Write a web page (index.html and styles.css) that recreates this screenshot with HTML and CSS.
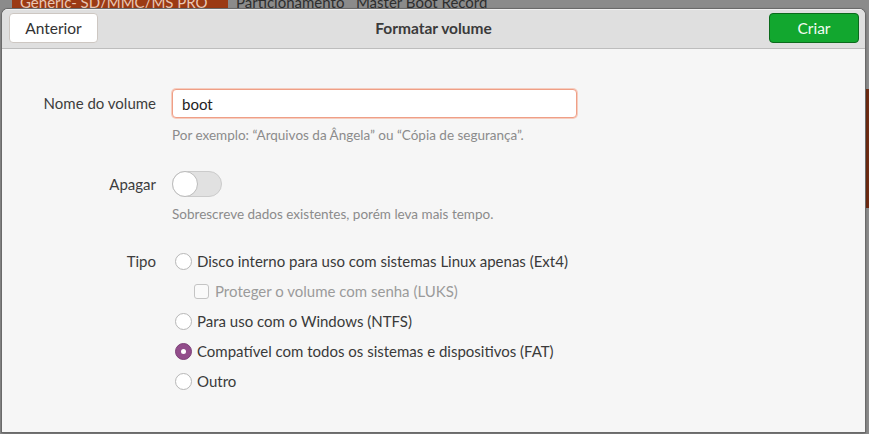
FILE: index.html
```html
<!DOCTYPE html>
<html lang="pt">
<head>
<meta charset="utf-8">
<title>Formatar volume</title>
<link rel="stylesheet" href="styles.css">
</head>
<body>
<div class="backdrop">
  <div class="behind-strip">
    <div class="behind-tab">Generic- SD/MMC/MS PRO</div>
    <div class="behind-text">Particionamento&nbsp;&nbsp; Master Boot Record</div>
  </div>
  <div class="behind-side"></div>
  <div class="dialog">
    <div class="headerbar">
      <button class="btn btn-prev">Anterior</button>
      <div class="title">Formatar volume</div>
      <button class="btn btn-create">Criar</button>
    </div>
    <div class="content">
      <div class="row row-name">
        <div class="label">Nome do volume</div>
        <div class="control">
          <div class="entry">boot</div>
          <div class="hint">Por exemplo: “Arquivos da Ângela” ou “Cópia de segurança”.</div>
        </div>
      </div>
      <div class="row row-erase">
        <div class="label">Apagar</div>
        <div class="control">
          <div class="switch"><span class="knob"></span></div>
          <div class="hint">Sobrescreve dados existentes, porém leva mais tempo.</div>
        </div>
      </div>
      <div class="row row-type">
        <div class="label">Tipo</div>
        <div class="control options">
          <div class="opt"><span class="radio"></span><span>Disco interno para uso com sistemas Linux apenas (Ext4)</span></div>
          <div class="opt sub disabled"><span class="check"></span><span>Proteger o volume com senha (LUKS)</span></div>
          <div class="opt"><span class="radio"></span><span>Para uso com o Windows (NTFS)</span></div>
          <div class="opt"><span class="radio on"></span><span>Compatível com todos os sistemas e dispositivos (FAT)</span></div>
          <div class="opt"><span class="radio"></span><span>Outro</span></div>
        </div>
      </div>
    </div>
  </div>
</div>
</body>
</html>
```

FILE: styles.css
```css
* { box-sizing: border-box; }
html, body { margin: 0; padding: 0; }
body {
  width: 869px;
  height: 434px;
  overflow: hidden;
  background: #8b8b8b;
  font-family: "Lato", "Noto Sans", sans-serif;
  color: #3d3d3d;
}
.backdrop {
  position: relative;
  width: 869px;
  height: 434px;
  display: flex;
  flex-direction: column;
}
.behind-strip {
  height: 9px;
  display: flex;
  overflow: hidden;
  font-size: 15px;
  line-height: 15px;
}
.behind-tab {
  margin-left: 12px;
  width: 216px;
  background: #9b3a14;
  color: #e9c7b6;
  padding-left: 8px;
  margin-top: -5px;
  height: 15px;
}
.behind-text {
  margin-left: 8px;
  color: #2e2e2e;
  margin-top: -5px;
}
.behind-side {
  position: absolute;
  right: 0;
  top: 89px;
  width: 6px;
  height: 119px;
  background: #6e2a12;
}
.dialog {
  position: relative;
  margin-left: 2px;
  width: 863px;
  height: 423px;
  background: #f6f6f6;
  border-radius: 6px 6px 0 0;
  box-shadow: 0 0 0 1px #6a6a6a, 0 1px 3px rgba(0,0,0,0.5);
  display: flex;
  flex-direction: column;
  overflow: hidden;
}
.headerbar {
  height: 40px;
  flex: none;
  background: #dfdfdf;
  border-bottom: 1px solid #bdbdbd;
  display: flex;
  align-items: center;
  justify-content: space-between;
  padding: 0 6px 2px 7px;
  box-shadow: inset 0 1px 0 #f0f0f0;
}
.btn {
  height: 30px;
  width: 90px;
  border-radius: 4px;
  font-family: inherit;
  font-size: 15.5px;
  padding: 0;
}
.btn-prev {
  background: #ffffff;
  border: 1px solid #cdc7c2;
  color: #333;
  width: 89px;
}
.btn-create {
  background: #12a72f;
  border: 1px solid #0b6a1c;
  color: #f2fbf3;
}
.title {
  font-weight: bold;
  font-size: 15.5px;
  color: #3b3b3b;
}
.content {
  padding-top: 40px;
  display: flex;
  flex-direction: column;
}
.row {
  display: grid;
  grid-template-columns: 154px 1fr;
  column-gap: 16px;
}
.label {
  text-align: right;
  font-size: 15px;
  color: #3d3d3d;
}
.row-name .label { line-height: 29px; }
.entry {
  width: 405px;
  height: 29px;
  background: #fff;
  border: 1px solid #ef9f86;
  box-shadow: 0 0 0 1px #f6cdbf;
  border-radius: 4px;
  padding-left: 9px;
  font-size: 15px;
  line-height: 28px;
  color: #222;
}
.hint {
  font-size: 13.5px;
  color: #8b8b8b;
  margin-top: 9px;
  line-height: 17px;
}
.row-erase { margin-top: 27px; }
.row-erase .label { line-height: 26px; }
.switch {
  width: 50px;
  height: 26px;
  border-radius: 13px;
  background: #e1e1e1;
  border: 1px solid #cbcbcb;
  position: relative;
}
.knob {
  position: absolute;
  left: -1px;
  top: -1px;
  width: 26px;
  height: 26px;
  border-radius: 50%;
  background: #fff;
  border: 1px solid #bcbcbc;
}
.row-type { margin-top: 23px; }
.row-type .label { line-height: 30px; }
.options { display: flex; flex-direction: column; }
.opt {
  height: 30px;
  display: flex;
  align-items: center;
  font-size: 15px;
  color: #3a3a3a;
  margin-left: 3px;
}
.opt.sub { margin-left: 22px; }
.opt.disabled { color: #9b9b9b; }
.radio {
  width: 17px;
  height: 17px;
  border-radius: 50%;
  background: #fff;
  border: 1px solid #b7b7b7;
  margin-right: 5px;
  flex: none;
  position: relative;
}
.radio.on {
  background: #924d8b;
  border-color: #7d3f77;
}
.radio.on::after {
  content: "";
  position: absolute;
  left: 5px;
  top: 5px;
  width: 5px;
  height: 5px;
  border-radius: 50%;
  background: #fff;
}
.check {
  width: 15px;
  height: 15px;
  border-radius: 3px;
  background: #fafafa;
  border: 1px solid #c4c4c4;
  margin-right: 6px;
  flex: none;
}
```
